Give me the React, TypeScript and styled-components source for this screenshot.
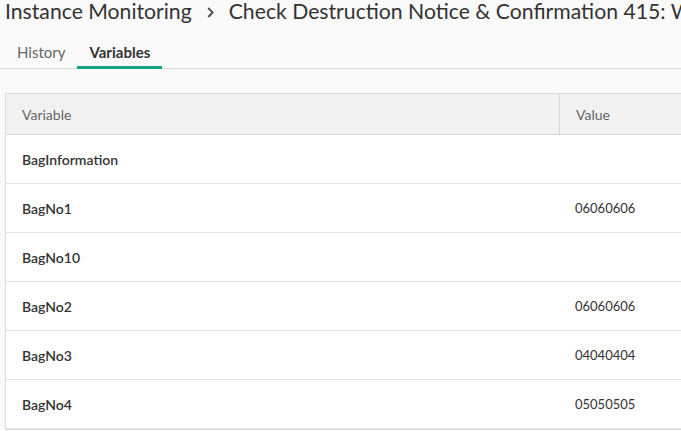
import React from "react";
import styled, { createGlobalStyle } from "styled-components";

const Global = createGlobalStyle`
  html, body { margin: 0; padding: 0; }
  body {
    background: #fafafa;
    font-family: Lato, "Open Sans", sans-serif;
    color: #333;
    overflow: hidden;
    width: 681px;
    height: 431px;
  }
`;

const Page = styled.div`
  display: flex;
  flex-direction: column;
`;

const Title = styled.h1`
  margin: 0;
  padding-left: 5px;
  font-size: 21.2px;
  font-weight: 400;
  line-height: 22px;
  color: #333;
  white-space: nowrap;
  display: flex;
  align-items: center;
  gap: 15px;
`;

const Chevron = styled.svg`
  width: 7px;
  height: 11px;
  flex: none;
  margin-top: 2px;
`;

const TabBar = styled.div`
  display: flex;
  margin-top: 18px;
  padding-left: 5px;
  border-bottom: 1px solid #dcdcdc;
`;

const Tab = styled.div<{ $active?: boolean }>`
  padding: 3px 12px 5px;
  font-size: 15px;
  font-weight: ${(p) => (p.$active ? 700 : 400)};
  color: ${(p) => (p.$active ? "#333" : "#666")};
  border-bottom: 3px solid ${(p) => (p.$active ? "#12a58a" : "transparent")};
  margin-bottom: -1px;
`;

const Table = styled.div`
  margin: 24px 0 0 5px;
  width: 800px;
  background: #fff;
  border: 1px solid #dcdcdc;
  border-right: none;
`;

const Row = styled.div<{ $head?: boolean }>`
  display: grid;
  grid-template-columns: 553px 1fr;
  height: ${(p) => (p.$head ? 40 : 48)}px;
  background: ${(p) => (p.$head ? "#f2f2f2" : "#fff")};
  border-bottom: 1px solid ${(p) => (p.$head ? "#d6d6d6" : "#e3e3e3")};
`;

const Cell = styled.div<{ $head?: boolean; $name?: boolean; $divider?: boolean }>`
  display: flex;
  align-items: center;
  padding-left: 16px;
  font-size: ${(p) => (p.$head || p.$name ? 14 : 13)}px;
  color: ${(p) => (p.$head ? "#666" : "#333")};
  font-weight: ${(p) => (p.$name ? 600 : 400)};
  border-left: ${(p) => (p.$divider ? "1px solid #d6d6d6" : "none")};
`;

const rows: [string, string][] = [
  ["BagInformation", ""],
  ["BagNo1", "06060606"],
  ["BagNo10", ""],
  ["BagNo2", "06060606"],
  ["BagNo3", "04040404"],
  ["BagNo4", "05050505"],
];

export default function App() {
  return (
    <Page>
      <Global />
      <Title>
        <span>Instance Monitoring</span>
        <Chevron viewBox="0 0 7 11">
          <path d="M1.2 1 L5.6 5.5 L1.2 10" fill="none" stroke="#555" strokeWidth="2" />
        </Chevron>
        <span>Check Destruction Notice &amp; Confirmation 415: Wait</span>
      </Title>
      <TabBar>
        <Tab>History</Tab>
        <Tab $active>Variables</Tab>
      </TabBar>
      <Table>
        <Row $head>
          <Cell $head>Variable</Cell>
          <Cell $head $divider>Value</Cell>
        </Row>
        {rows.map(([n, v]) => (
          <Row key={n}>
            <Cell $name>{n}</Cell>
            <Cell>{v}</Cell>
          </Row>
        ))}
      </Table>
    </Page>
  );
}
